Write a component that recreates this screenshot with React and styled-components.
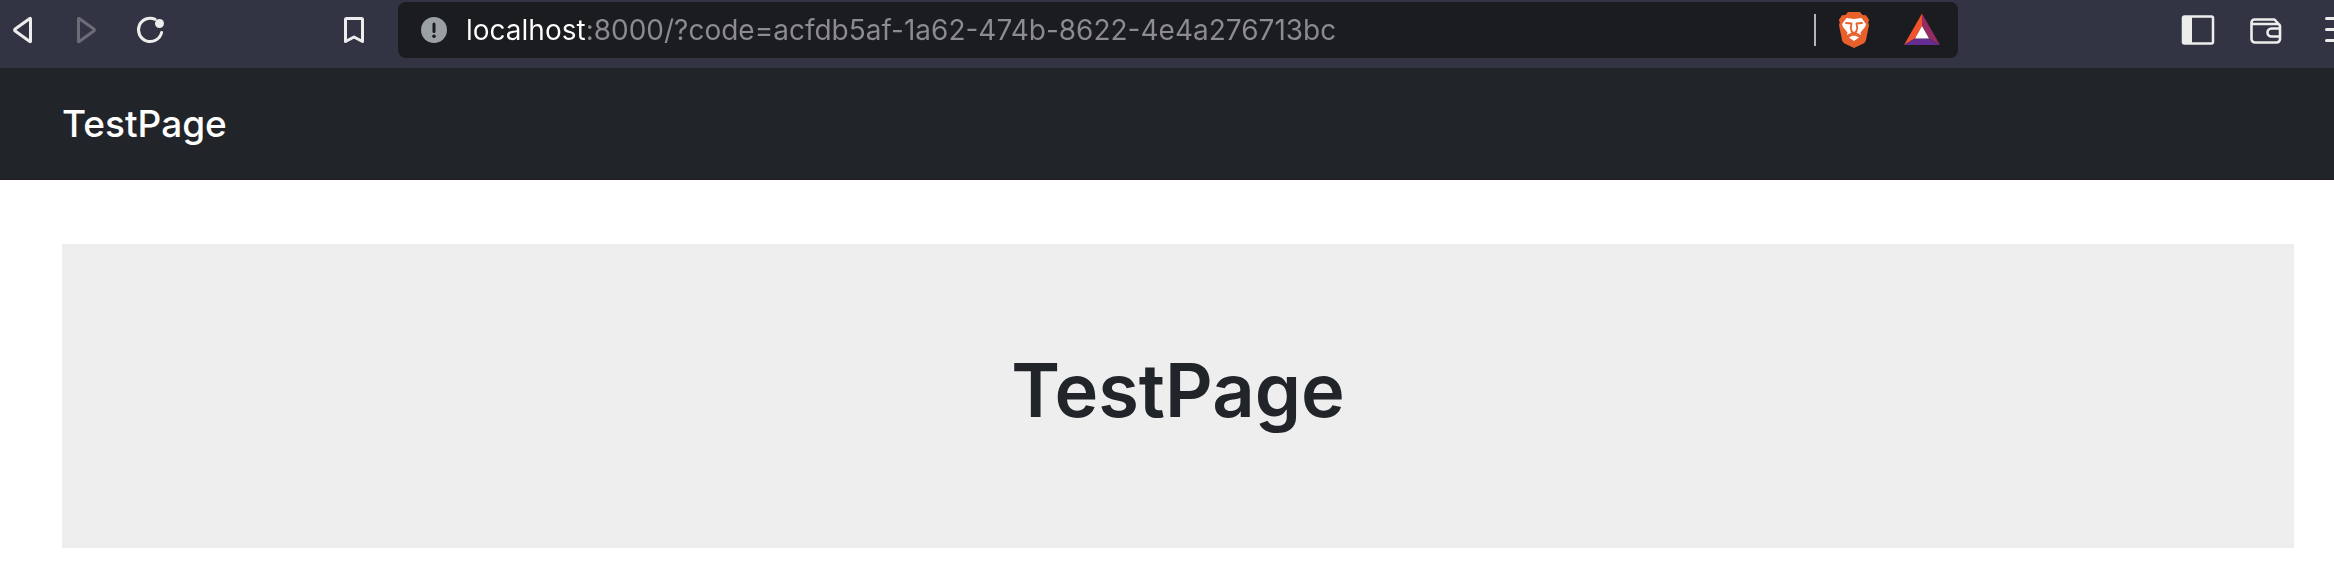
import React, { useState } from 'react';
import styled, { createGlobalStyle } from 'styled-components';

const GlobalStyle = createGlobalStyle`
    * {
        box-sizing: border-box;
    }

    body {
        margin: 0;
        background: #fff;
        color: #212529;
        font-family: Inter, "Liberation Sans", sans-serif;
        overflow-x: hidden;
    }
`;

const Toolbar = styled.div`
    display: flex;
    align-items: center;
    gap: 24px;
    height: 68px;
    padding: 2px 0 10px 2px;
    background: #323443;
    overflow: hidden;
`;

const IconButton = styled.button`
    display: flex;
    flex: none;
    align-items: center;
    justify-content: center;
    width: 40px;
    height: 40px;
    padding: 0;
    border: 0;
    background: none;
    color: ${props => (props.disabled ? '#6c6d77' : '#ededed')};
`;

const BookmarkSlot = styled.div`
    padding-left: 140px;
`;

const AddressBar = styled.form`
    display: flex;
    flex: 1;
    align-items: center;
    height: 56px;
    margin: 0;
    padding: 0 16px;
    border-radius: 8px;
    background: #1b1c20;
`;

// the host part is white, the rest of the url is grey
const AddressInput = styled.input`
    flex: 1;
    min-width: 0;
    height: 40px;
    margin-left: 12px;
    padding: 0;
    border: 0;
    outline: 0;
    color: #8b8b90;
    font-family: inherit;
    font-size: 28px;
    background: linear-gradient(to right, #fff 120px, #8b8b90 120px);
    background-clip: text;
    -webkit-background-clip: text;
    -webkit-text-fill-color: transparent;
`;

const Divider = styled.span`
    width: 2px;
    height: 32px;
    margin-right: 18px;
    background: #b4b5b8;
`;

const Extensions = styled.div`
    display: flex;
    gap: 28px;
`;

const Actions = styled.div`
    display: flex;
    gap: 28px;
    margin-right: -20px;
    padding-left: 196px;
`;

const Navbar = styled.nav`
    display: flex;
    align-items: center;
    height: 112px;
    padding: 0 62px;
    border-bottom: 1px solid #241c26;
    background: #212529;
`;

const Brand = styled.a`
    color: #fff;
    font-size: 37px;
    font-weight: 500;
    line-height: 60px;
    text-decoration: none;
`;

const Main = styled.main`
    padding: 64px 40px 34px 62px;
`;

const Hero = styled.section`
    padding: 98px 32px 110px;
    background: #eee;
    text-align: center;
`;

const Title = styled.h1`
    margin: 0;
    font-size: 74px;
    font-weight: 600;
    line-height: 96px;
`;

const Icon = ({ children }) => (
    <svg
        width="40"
        height="40"
        viewBox="0 0 40 40"
        fill="none"
        stroke="currentColor"
        strokeWidth="3"
        strokeLinecap="round"
        strokeLinejoin="round"
        aria-hidden="true"
    >
        {children}
    </svg>
);

const BackIcon = () => (
    <Icon>
        <path d="M28.5 8.8v22.4q0 .8-.7.3L13.2 21q-1.2-1 0-2L27.8 8.5q.7-.5.7.3z" />
    </Icon>
);

const ForwardIcon = () => (
    <Icon>
        <path d="M12.5 8.8v22.4q0 .8.7.3L27.8 21q1.2-1 0-2L13.2 8.5q-.7-.5-.7.3z" />
    </Icon>
);

const ReloadIcon = () => (
    <Icon>
        <path d="M25.2 9.3A11.7 11.7 0 1 0 31.6 22.5" />
        <circle cx="29.5" cy="13.5" r="4.5" fill="currentColor" stroke="none" />
    </Icon>
);

const BookmarkIcon = () => (
    <Icon>
        <path d="M11.5 9.5q0-1 1-1h15q1 0 1 1v22L20 27l-8.5 4.5z" />
    </Icon>
);

const InfoIcon = () => (
    <Icon>
        <circle cx="20" cy="20" r="13" fill="#9aa0a3" stroke="none" />
        <path d="M20 14v7.5" stroke="#1b1c20" />
        <circle cx="20" cy="26.3" r="1.8" fill="#1b1c20" stroke="none" />
    </Icon>
);

const ShieldIcon = () => (
    <Icon>
        <g stroke="none">
            <path fill="#e8602c" d="M14 2h12l2.5 3 3.5.2 3.2 4.8-1 2.5.8 2.5-3 15q-.5 2.2-2.5 3.5L20 38l-9.500-4.500Q8.500 32.200 8 30L5 15l.8-2.500-1-2.500L8 5.200l3.500-.2z" />
            <path fill="#fff" d="M12.5 8l7.5 1 7.5-1 4.5 6-1 3-4.5 5.5.5 2.5H13l.5-2.5L9 17l-1-3z" />
            <path fill="#fff" d="M15 27.5l5-2.5 5 2.5-5 3.5z" />
        </g>
        <path stroke="#e8602c" strokeWidth="1.8" d="M12 13l5.5.5-.8 5 1.300 3M28 13l-5.500.5.8 5-1.300 3M14 25.500l3.500-2L20 25l2.500-1.500 3.500 2M17.500 21.500L20 23l2.500-1.500" />
    </Icon>
);

const TriangleIcon = () => (
    <Icon>
        <g stroke="none">
            <path fill="#f0532d" d="M20 3.5L2 35l11-6.5 7-12.5z" />
            <path fill="#952b62" d="M20 3.5L38 35l-11-6.5L20 16z" />
            <path fill="#652d91" d="M2 35h36l-11-6.5H13z" />
            <path fill="#fff" d="M20 16l7 12.5H13z" />
        </g>
    </Icon>
);

const SidebarIcon = () => (
    <Icon>
        <rect x="5" y="6.5" width="30" height="27" rx="1.5" strokeWidth="2.5" />
        <path d="M5.5 7H14v26H5.500z" fill="currentColor" stroke="none" />
    </Icon>
);

const WalletIcon = () => (
    <Icon>
        <path strokeWidth="2.6" d="M33.500 15l-5-5.500h-20a3 3 0 0 0-3 3V29a3.500 3.500 0 0 0 3.500 3.500h21.500a3.500 3.500 0 0 0 3.500-3.500V16.500a2.500 2.500 0 0 0-2.500-2.500H6M34 18.500h-8.500a4 4 0 0 0 0 8H34" />
    </Icon>
);

const MenuIcon = () => (
    <Icon>
        <path d="M12.5 8.5H38M12.5 19.5H38M12.5 30.5H38" />
    </Icon>
);

export default function App() {
    const [url, setUrl] = useState('localhost:8000/?code=acfdb5af-1a62-474b-8622-4e4a276713bc');

    return (
        <>
            <GlobalStyle />
            <Toolbar>
                <IconButton aria-label="Back"><BackIcon /></IconButton>
                <IconButton aria-label="Forward" disabled><ForwardIcon /></IconButton>
                <IconButton aria-label="Reload"><ReloadIcon /></IconButton>
                <BookmarkSlot>
                    <IconButton aria-label="Bookmark"><BookmarkIcon /></IconButton>
                </BookmarkSlot>
                <AddressBar onSubmit={e => e.preventDefault()}>
                    <IconButton type="button" aria-label="Site information"><InfoIcon /></IconButton>
                    <AddressInput
                        type="text"
                        aria-label="Address"
                        spellCheck={false}
                        value={url}
                        onChange={e => setUrl(e.target.value)}
                    />
                    <Divider />
                    <Extensions>
                        <IconButton type="button" aria-label="Shields"><ShieldIcon /></IconButton>
                        <IconButton type="button" aria-label="Rewards"><TriangleIcon /></IconButton>
                    </Extensions>
                </AddressBar>
                <Actions>
                    <IconButton aria-label="Sidebar"><SidebarIcon /></IconButton>
                    <IconButton aria-label="Wallet"><WalletIcon /></IconButton>
                    <IconButton aria-label="Menu"><MenuIcon /></IconButton>
                </Actions>
            </Toolbar>
            <Navbar>
                <Brand href="/">TestPage</Brand>
            </Navbar>
            <Main>
                <Hero>
                    <Title>TestPage</Title>
                </Hero>
            </Main>
        </>
    );
}
